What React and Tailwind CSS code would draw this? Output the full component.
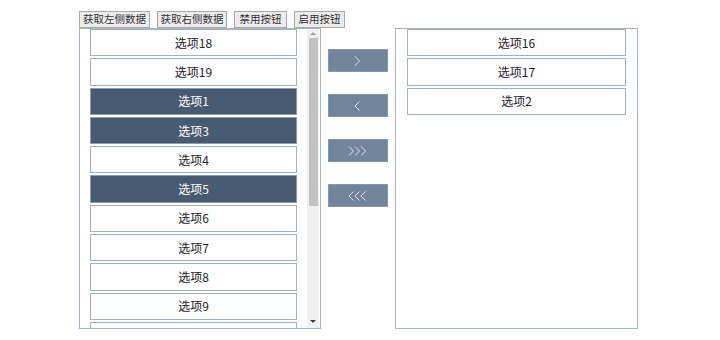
import React from "react";

const leftItems = [
  { t: "选项18" },
  { t: "选项19" },
  { t: "选项1", s: true },
  { t: "选项3", s: true },
  { t: "选项4" },
  { t: "选项5", s: true },
  { t: "选项6" },
  { t: "选项7" },
  { t: "选项8" },
  { t: "选项9" },
  { t: "" },
];

const rightItems = ["选项16", "选项17", "选项2"];

const font = { fontFamily: '"Noto Sans CJK SC", "DejaVu Sans", sans-serif' };

function Item({ t, s, w }) {
  return (
    <div
      className={`${w} h-[27.3px] shrink-0 flex items-center justify-center text-[12px] border ${
        s ? "bg-[#465a72] text-white border-[#8e9cae]" : "bg-white text-[#222] border-[#a3afbe]"
      }`}
    >
      {t}
    </div>
  );
}

function Chevrons({ n, left }) {
  const w = 4 + n * 6;
  return (
    <svg width={w} height="12" viewBox={`0 0 ${w} 12`} fill="none" stroke="#dfe6ee" strokeWidth="1">
      {Array.from({ length: n }).map((_, i) => {
        const x = 2 + i * 6;
        return left ? (
          <polyline key={i} points={`${x + 4.5},1.5 ${x},6 ${x + 4.5},10.5`} />
        ) : (
          <polyline key={i} points={`${x},1.5 ${x + 4.5},6 ${x},10.5`} />
        );
      })}
    </svg>
  );
}

const topButtons = [
  { t: "获取左侧数据", w: "w-[71px]" },
  { t: "获取右侧数据", w: "w-[70px]" },
  { t: "禁用按钮", w: "w-[53px]" },
  { t: "启用按钮", w: "w-[51px]" },
];

export default function App() {
  return (
    <div className="w-[720px] h-[340px] bg-white overflow-hidden" style={font}>
      <div className="pl-[79px] pt-[11px]">
        <div className="flex gap-[7px] h-[17px]">
          {topButtons.map((b) => (
            <div
              key={b.t}
              className={`${b.w} h-[17px] flex items-center justify-center bg-[#ececec] border border-[#a9a9a9] text-[10.5px] text-[#333] leading-none whitespace-nowrap`}
            >
              {b.t}
            </div>
          ))}
        </div>
        <div className="flex">
          <div className="w-[242px] h-[301px] border border-[#a7b4c4] flex overflow-hidden">
            <div className="flex-1 pl-[10px] flex flex-col gap-[2px] overflow-hidden">
              {leftItems.map((i, k) => (
                <Item key={k} t={i.t} s={i.s} w="w-[207px]" />
              ))}
            </div>
            <div className="w-[12px] bg-[#f0f0f0] flex flex-col items-center mr-[1px]">
              <div className="h-[9px] flex items-center justify-center">
                <div className="w-0 h-0 border-l-[3px] border-r-[3px] border-b-[3px] border-l-transparent border-r-transparent border-b-[#a0a0a0]" />
              </div>
              <div className="w-[9px] h-[168px] bg-[#c2c2c2]" />
              <div className="flex-1" />
              <div className="h-[10px] flex items-center justify-center mb-[2px]">
                <div className="w-0 h-0 border-l-[3px] border-r-[3px] border-t-[3px] border-l-transparent border-r-transparent border-t-[#404040]" />
              </div>
            </div>
          </div>
          <div className="w-[60px] ml-[7px] pt-[21px] flex flex-col gap-[22px]">
            {[
              { n: 1, l: false },
              { n: 1, l: true },
              { n: 3, l: false },
              { n: 3, l: true },
            ].map((a, k) => (
              <div
                key={k}
                className="h-[23px] bg-[#71849c] border border-[#8797ab] flex items-center justify-center"
              >
                <Chevrons n={a.n} left={a.l} />
              </div>
            ))}
          </div>
          <div className="w-[243px] h-[301px] ml-[7px] border border-[#a7b4c4] pl-[11px] flex flex-col gap-[2px]">
            {rightItems.map((t) => (
              <Item key={t} t={t} w="w-[219px]" />
            ))}
          </div>
        </div>
      </div>
    </div>
  );
}
